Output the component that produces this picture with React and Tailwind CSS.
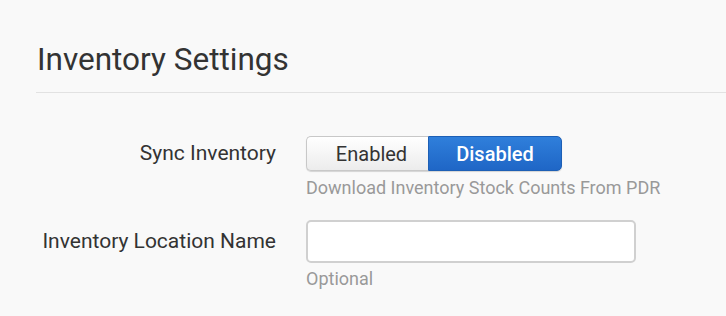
export default function App() {
  return (
    <div className="w-[726px] h-[316px] overflow-hidden bg-[#f9f9f9] font-['Roboto',sans-serif]">
      {/* Header */}
      <div className="pl-[36px] pt-[40px]">
        <h1 className="text-[31.5px] leading-[40px] text-[#333] pl-[1px]">Inventory Settings</h1>
        <div className="mt-[12px] h-px bg-[#e2e2e2]" />
      </div>

      {/* Form */}
      <div className="pl-[36px] pt-[43px] flex flex-col gap-[21px]">
        <div className="flex">
          <div className="w-[240px] h-[35px] flex items-center justify-end text-[21px] text-[#333]">
            Sync Inventory
          </div>
          <div className="ml-[30px] flex flex-col">
            <div className="flex h-[35px] w-[256px] rounded-[5px] shadow-[0_1px_1px_rgba(0,0,0,0.15)]">
              <button className="w-[122px] pl-2 rounded-l-[5px] border border-[#c8c8c8] border-r-0 bg-gradient-to-b from-white to-[#ececec] text-[20px] text-[#333]">
                Enabled
              </button>
              <button className="flex-1 rounded-r-[5px] border border-[#1d5fb5] bg-gradient-to-b from-[#2f7fdb] to-[#1f66c6] text-[20px] font-medium text-white">
                Disabled
              </button>
            </div>
            <p className="mt-[6px] text-[18px] leading-[22px] text-[#999]">
              Download Inventory Stock Counts From PDR
            </p>
          </div>
        </div>

        <div className="flex">
          <div className="w-[240px] h-[43px] flex items-center justify-end text-[21px] text-[#333]">
            Inventory Location Name
          </div>
          <div className="ml-[30px] flex flex-col">
            <input
              type="text"
              className="w-[330px] h-[43px] rounded-[5px] border-2 border-[#d0d0d0] bg-white px-3 text-[16px] outline-none"
            />
            <p className="mt-[5px] text-[18px] leading-[22px] text-[#999]">Optional</p>
          </div>
        </div>
      </div>
    </div>
  );
}
